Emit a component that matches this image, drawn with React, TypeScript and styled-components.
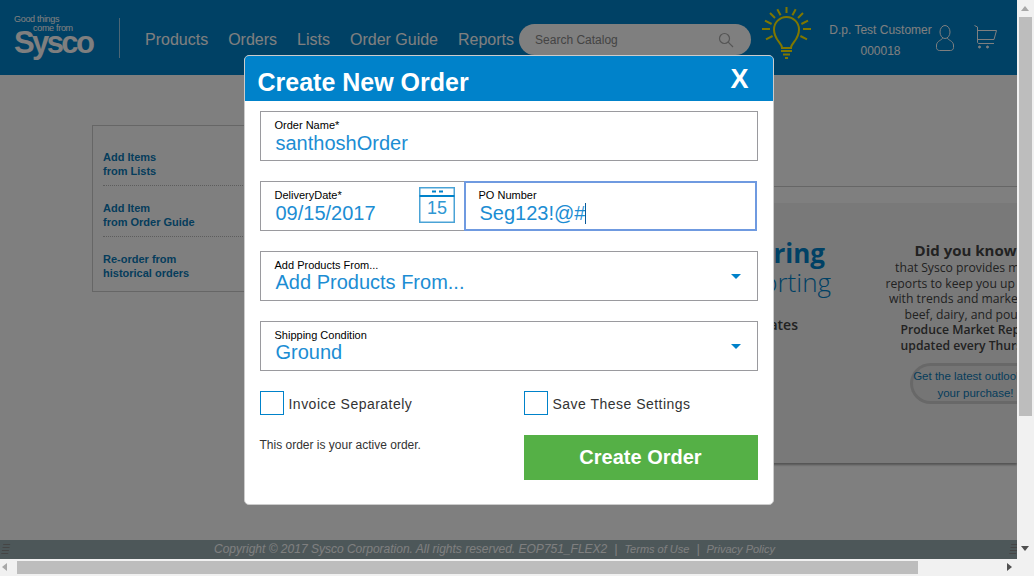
import * as React from "react";
import styled, { createGlobalStyle } from "styled-components";

const blue = "#0082ca";
const valueBlue = "#1c8dd3";
const sans = `"Liberation Sans", Arial, sans-serif`;

const Global = createGlobalStyle`
  html, body {
    margin: 0;
    height: 100%;
    overflow: hidden;
    font-family: ${sans};
  }
  #root {
    height: 100%;
  }
`;

const Shell = styled.div`
  display: grid;
  grid-template-columns: 1017px 17px;
  grid-template-rows: 559px 17px;
  height: 576px;
  background: #f1f1f1;
`;

const Viewport = styled.div`
  position: relative;
  display: flex;
  flex-direction: column;
  overflow: hidden;
  background: #fff;
`;

/* header */
const Header = styled.header`
  display: flex;
  align-items: center;
  flex: 0 0 75px;
  padding-left: 14px;
  background: ${blue};
  color: #fff;
`;

const Logo = styled.div`
  display: flex;
  flex-direction: column;
  width: 80px;
  height: 42px;
  margin-top: -4px;
`;

const Tagline = styled.span<{ $indent?: number }>`
  font-size: 9px;
  line-height: 9px;
  letter-spacing: -0.3px;
  color: #fff;
  padding-left: ${(p) => p.$indent ?? 0}px;
`;

const LogoWord = styled.span`
  font-size: 31px;
  font-weight: 700;
  line-height: 26px;
  letter-spacing: -2.6px;
  margin-top: -3px;
`;

const Divider = styled.div`
  width: 1px;
  height: 40px;
  margin: 0 25px;
  background: #fff;
  opacity: 0.6;
`;

const Nav = styled.nav`
  display: flex;
  gap: 20px;
  margin-top: 4px;
  font-size: 16px;
`;

const Search = styled.div`
  display: flex;
  align-items: center;
  justify-content: space-between;
  box-sizing: border-box;
  width: 232px;
  height: 31px;
  margin: 4px 0 0 5px;
  padding: 0 17px 0 16px;
  border-radius: 16px;
  background: #fff;
  color: #888;
  font-size: 12px;
`;

const Bulb = styled.svg`
  flex: none;
  width: 50px;
  height: 54px;
  margin: -7px 0 0 11px;
`;

const Account = styled.div`
  display: flex;
  flex-direction: column;
  align-items: center;
  gap: 7px;
  flex: none;
  width: 103px;
  margin: 5px 0 0 17px;
  font-size: 12px;
  line-height: 14px;
`;

const UserIcon = styled.svg`
  flex: none;
  width: 18px;
  height: 26px;
  margin: 1px 0 0 4px;
`;

const CartIcon = styled.svg`
  flex: none;
  width: 23px;
  height: 25px;
  margin: 0 0 0 20px;
`;

/* page body */
const Main = styled.main`
  position: relative;
  flex: 1;
  padding: 50px 0 0 92px;
`;

const Rule = styled.div`
  position: absolute;
  left: 640px;
  right: 0;
  top: 111px;
  height: 1px;
  background: #ccc;
`;

const SideCard = styled.div`
  box-sizing: border-box;
  width: 300px;
  height: 167px;
  padding: 24px 0 0 10px;
  border: 1px solid #ccc;
`;

const SideLink = styled.div<{ $last?: boolean }>`
  padding-bottom: 7px;
  font-size: 11px;
  font-weight: 700;
  line-height: 14px;
  color: #0a7ab8;
  border-bottom: 1px dotted ${(p) => (p.$last ? "transparent" : "#bbb")};
  & + & {
    padding-top: 15px;
  }
`;

const Banner = styled.div`
  position: absolute;
  left: 640px;
  right: 0;
  top: 128px;
  display: flex;
  height: 260px;
  background: #f3f3f3;
  box-shadow: 0 2px 2px rgba(0, 0, 0, 0.35);
`;

const BannerLead = styled.div`
  flex: none;
  box-sizing: border-box;
  width: 191px;
  padding-top: 35px;
  text-align: right;
  font-family: "Open Sans", sans-serif;
  white-space: nowrap;
`;

const LeadStrong = styled.div`
  padding-right: 6px;
  font-size: 26px;
  font-weight: 700;
  line-height: 30px;
  color: ${blue};
`;

const LeadThin = styled.div`
  font-size: 26px;
  font-weight: 300;
  line-height: 29px;
  color: ${blue};
`;

const LeadNote = styled.div`
  margin-top: 19px;
  padding-right: 33px;
  font-size: 14px;
  font-weight: 600;
  line-height: 18px;
  color: #444;
`;

const Fact = styled.div`
  flex: none;
  width: 190px;
  margin-left: 46px;
  padding-top: 38px;
  font-family: "Open Sans", sans-serif;
  font-size: 12.2px;
  line-height: 15.6px;
  text-align: center;
  white-space: nowrap;
  color: #444;
`;

const FactTitle = styled.div`
  font-size: 15px;
  font-weight: 700;
  line-height: 19px;
`;

const FactStrong = styled.div`
  font-weight: 600;
`;

const Pill = styled.div`
  box-sizing: border-box;
  width: 140px;
  height: 41px;
  margin: 9px 0 0 33px;
  padding: 2px 12px 0 0;
  border: 3px solid #d0d0d0;
  border-right: 0;
  border-radius: 21px 0 0 21px;
  background: #eaeaea;
  font-family: ${sans};
  font-size: 11.5px;
  line-height: 17px;
  color: #0a7ab8;
  text-align: center;
`;

/* footer */
const Footer = styled.footer`
  position: relative;
  display: flex;
  align-items: center;
  flex: 0 0 19px;
  box-sizing: border-box;
  gap: 7px;
  padding: 0 0 1px 214px;
  background: #9aaeb3;
  color: #fff;
  font-size: 12px;
  font-style: italic;
  white-space: nowrap;
`;

const FooterLink = styled.span`
  font-size: 11px;
`;

const Grip = styled.span<{ $right?: boolean }>`
  position: absolute;
  bottom: 3px;
  left: ${(p) => (p.$right ? "1010px" : "2px")};
  width: 7px;
  height: 12px;
  background: repeating-linear-gradient(to bottom, #8a8a8a 0 1px, transparent 1px 3px);
  transform: skewX(-12deg);
`;

/* modal */
const Backdrop = styled.div`
  position: absolute;
  inset: 0;
  display: flex;
  justify-content: center;
  align-items: flex-start;
  padding-top: 55px;
  background: rgba(0, 0, 0, 0.5);
`;

const Modal = styled.div`
  box-sizing: border-box;
  width: 530px;
  height: 450px;
  overflow: hidden;
  border: 1px solid #ccc;
  border-radius: 5px;
  background: #fff;
`;

const ModalHead = styled.div`
  display: flex;
  align-items: center;
  justify-content: space-between;
  height: 45px;
  padding: 0 24px 0 13px;
  background: ${blue};
  color: #fff;
  font-weight: 700;
`;

const ModalTitle = styled.h1`
  margin: 6px 0 0;
  font-size: 25px;
  line-height: 30px;
`;

const CloseX = styled.span`
  margin-top: 1px;
  font-size: 27px;
  line-height: 30px;
`;

const ModalBody = styled.div`
  display: flex;
  flex-direction: column;
  gap: 20px;
  padding: 10px 15px 0;
`;

const Field = styled.div<{ $grow?: boolean }>`
  position: relative;
  box-sizing: border-box;
  flex: ${(p) => (p.$grow ? "1" : "none")};
  height: 50px;
  padding: 7px 14px 0;
  border: 1px solid #9a9a9e;
`;

const SplitRow = styled.div`
  display: flex;
`;

const DateField = styled(Field)`
  width: 204px;
  border-right: 0;
`;

const PoField = styled(Field)`
  margin-right: 1px;
  padding: 6px 13px 0;
  border: 2px solid #6f9ae0;
`;

const Label = styled.div`
  font-size: 11px;
  line-height: 12px;
  color: #000;
`;

const Value = styled.div<{ $tight?: boolean }>`
  display: flex;
  align-items: center;
  padding-left: 1px;
  margin-top: ${(p) => (p.$tight ? "0" : "-1px")};
  font-size: 20px;
  line-height: ${(p) => (p.$tight ? "22px" : "26px")};
  color: ${valueBlue};
`;

const Caret = styled.span`
  display: inline-block;
  width: 1px;
  height: 21px;
  background: #0a5a9a;
`;

const Calendar = styled.svg`
  position: absolute;
  right: 9px;
  top: 5px;
  width: 36px;
  height: 36px;
`;

const Arrow = styled.span`
  position: absolute;
  right: 16px;
  top: 22px;
  border-left: 5px solid transparent;
  border-right: 5px solid transparent;
  border-top: 5px solid ${blue};
`;

const OptionRow = styled.div`
  display: grid;
  grid-template-columns: 264px 1fr;
`;

const Option = styled.label`
  display: flex;
  align-items: center;
  gap: 5px;
  font-size: 14px;
  letter-spacing: 0.48px;
  color: #333;
`;

const OptionText = styled.span`
  margin-top: 2px;
`;

const Box = styled.span`
  box-sizing: border-box;
  width: 24px;
  height: 24px;
  border: 1px solid ${blue};
`;

const ActionRow = styled.div`
  display: grid;
  grid-template-columns: 264px 1fr;
`;

const Note = styled.p`
  margin: 3px 0 0;
  font-size: 12px;
  line-height: 14px;
  color: #333;
`;

const CreateButton = styled.button`
  height: 45px;
  border: 0;
  background: #55b046;
  color: #fff;
  font-family: ${sans};
  font-size: 20px;
  font-weight: 700;
`;

/* browser scrollbars */
const VBar = styled.div`
  position: relative;
  grid-row: 1 / 3;
  grid-column: 2;
`;

const VThumb = styled.div`
  position: absolute;
  left: 2px;
  right: 2px;
  top: 17px;
  height: 399px;
  background: #bdbdbd;
`;

const HBar = styled.div`
  position: relative;
`;

const HThumb = styled.div`
  position: absolute;
  left: 17px;
  top: 2px;
  bottom: 2px;
  width: 901px;
  background: #bdbdbd;
`;

const Tri = styled.span<{ $dir: "up" | "down" | "left" | "right"; $dark?: boolean }>`
  position: absolute;
  width: 0;
  height: 0;
  border: 4px solid transparent;
  ${(p) => {
    const c = p.$dark ? "#505050" : "#a8a8a8";
    switch (p.$dir) {
      case "up":
        return `border-top-width:0;border-bottom:5px solid ${c};top:6px;left:4px;`;
      case "down":
        return `border-bottom-width:0;border-top:5px solid ${c};top:546px;left:4px;`;
      case "left":
        return `border-left-width:0;border-right:5px solid ${c};top:4px;left:2px;`;
      default:
        return `border-right-width:0;border-left:5px solid ${c};top:4px;left:1007px;`;
    }
  }}
`;

const App: React.FC = () => (
  <Shell>
    <Global />
    <Viewport>
      <Header>
        <Logo>
          <Tagline>Good things</Tagline>
          <Tagline $indent={19}>come from</Tagline>
          <LogoWord>Sysco</LogoWord>
        </Logo>
        <Divider />
        <Nav>
          <span>Products</span>
          <span>Orders</span>
          <span>Lists</span>
          <span>Order Guide</span>
          <span>Reports</span>
        </Nav>
        <Search>
          Search Catalog
          <svg width="16" height="16" viewBox="0 0 16 16" fill="none" stroke="#aaa" strokeWidth="1.2">
            <circle cx="6.5" cy="6.5" r="5" />
            <path d="M10.2 10.2 15 15" />
          </svg>
        </Search>
        <Bulb viewBox="0 0 50 54" fill="none" stroke="#ffee00" strokeWidth="2">
          <path d="M20 41c0-5-8-8-8-18.500a12.500 12.500 0 0 1 25 0c0 10.500-8 13.500-8 18.500z" />
          <path d="M19 44h11M21 47.500h7M23 51h3" />
          <path d="M24.500 0v6M15.300 2.300l3.300 6M33.700 2.300l-3.300 6M8 6l5 5M41 6l-5 5M3 13.600l6.600 3.400M46 13.600l-6.600 3.400M0 22h8M49 22h-8M4 32.300l6.600-3.300M45 32.300l-6.600-3.300" />
        </Bulb>
        <Account>
          <span>D.p. Test Customer</span>
          <span>000018</span>
        </Account>
        <UserIcon viewBox="0 0 18 26" fill="none" stroke="#fff" strokeWidth="1">
          <ellipse cx="9" cy="7" rx="5" ry="6.500" />
          <path d="M6.500 13C6.500 15 1 15.500.5 20v2.500c0 2 1.500 3 3 3h11c1.500 0 3-1 3-3V20C17 15.500 11.500 15 11.500 13" />
        </UserIcon>
        <CartIcon viewBox="0 0 23 25" fill="none" stroke="#fff" strokeWidth="1">
          <path d="M.5.5l3 1.500V17c0 1 .5 1.500 1.500 1.500h15M3.500 5.500h19l-2.500 9H3.500" />
          <circle cx="5.500" cy="22" r="1" fill="#fff" />
          <circle cx="13.500" cy="22" r="1" fill="#fff" />
        </CartIcon>
      </Header>
      <Main>
        <Rule />
        <SideCard>
          <SideLink>
            Add Items
            <br />
            from Lists
          </SideLink>
          <SideLink>
            Add Item
            <br />
            from Order Guide
          </SideLink>
          <SideLink $last>
            Re-order from
            <br />
            historical orders
          </SideLink>
        </SideCard>
        <Banner>
          <BannerLead>
            <LeadStrong>ring</LeadStrong>
            <LeadThin>orting</LeadThin>
            <LeadNote>ates</LeadNote>
          </BannerLead>
          <Fact>
            <FactTitle>Did you know...</FactTitle>
            <div>that Sysco provides market</div>
            <div>reports to keep you up to date</div>
            <div>with trends and market news</div>
            <div>beef, dairy, and poultry.</div>
            <FactStrong>Produce Market Reports</FactStrong>
            <FactStrong>updated every Thursday</FactStrong>
            <Pill>
              Get the latest outlook on
              <br />
              your purchase!
            </Pill>
          </Fact>
        </Banner>
      </Main>
      <Footer>
        <Grip />
        <span>Copyright © 2017 Sysco Corporation. All rights reserved. EOP751_FLEX2</span>
        <span>|</span>
        <FooterLink>Terms of Use</FooterLink>
        <span>|</span>
        <FooterLink>Privacy Policy</FooterLink>
        <Grip $right />
      </Footer>
      <Backdrop>
        <Modal>
          <ModalHead>
            <ModalTitle>Create New Order</ModalTitle>
            <CloseX>X</CloseX>
          </ModalHead>
          <ModalBody>
            <Field>
              <Label>Order Name*</Label>
              <Value>santhoshOrder</Value>
            </Field>
            <SplitRow>
              <DateField>
                <Label>DeliveryDate*</Label>
                <Value>09/15/2017</Value>
                <Calendar viewBox="0 0 36 36" fill="none" stroke="#4aa3d6">
                  <rect x="0.750" y="0.750" width="34.500" height="34.500" strokeWidth="1.500" />
                  <path d="M0.500 9h35" strokeWidth="2" stroke={blue} />
                  <path d="M13 4.500h4M20 4.500h4" strokeWidth="2" stroke={blue} />
                  <text x="18" y="27" textAnchor="middle" fontSize="18" fill="#2f97d3" stroke="none" fontFamily={sans}>
                    15
                  </text>
                </Calendar>
              </DateField>
              <PoField $grow>
                <Label>PO Number</Label>
                <Value>
                  Seg123!@#
                  <Caret />
                </Value>
              </PoField>
            </SplitRow>
            <Field>
              <Label>Add Products From...</Label>
              <Value $tight>Add Products From...</Value>
              <Arrow />
            </Field>
            <Field>
              <Label>Shipping Condition</Label>
              <Value $tight>Ground</Value>
              <Arrow />
            </Field>
            <OptionRow>
              <Option>
                <Box />
                <OptionText>Invoice Separately</OptionText>
              </Option>
              <Option>
                <Box />
                <OptionText>Save These Settings</OptionText>
              </Option>
            </OptionRow>
            <ActionRow>
              <Note>This order is your active order.</Note>
              <CreateButton>Create Order</CreateButton>
            </ActionRow>
          </ModalBody>
        </Modal>
      </Backdrop>
    </Viewport>
    <VBar>
      <Tri $dir="up" />
      <VThumb />
      <Tri $dir="down" $dark />
    </VBar>
    <HBar>
      <Tri $dir="left" />
      <HThumb />
      <Tri $dir="right" $dark />
    </HBar>
  </Shell>
);

export default App;
